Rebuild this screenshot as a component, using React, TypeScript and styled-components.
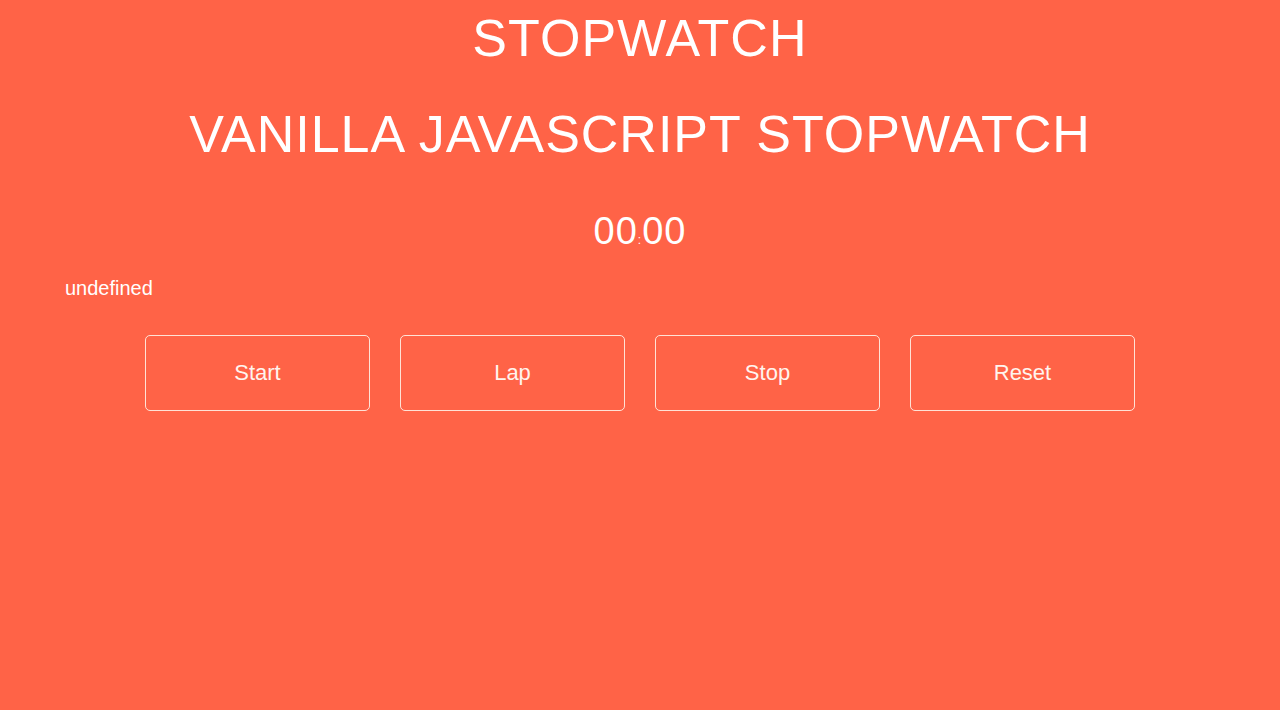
import React from "react";
import styled, { createGlobalStyle } from "styled-components";

const GlobalStyle = createGlobalStyle`
  html, body {
    margin: 0;
    padding: 0;
    background: #ff6347;
  }
  body {
    font-family: "Liberation Sans", Arial, Helvetica, sans-serif;
    color: #fff;
  }
`;

const Page = styled.div`
  min-height: 710px;
  display: flex;
  flex-direction: column;
  align-items: center;
  padding-top: 9px;
  box-sizing: border-box;
`;

const Title = styled.h1`
  margin: 0;
  font-size: 52px;
  font-weight: 400;
  line-height: 58px;
  letter-spacing: 1.1px;
`;

const Subtitle = styled.h2`
  margin: 38px 0 0;
  font-size: 52px;
  font-weight: 400;
  line-height: 58px;
  letter-spacing: 1px;
`;

const Timer = styled.div`
  margin-top: 46px;
  font-size: 38px;
  font-weight: 300;
  line-height: 44px;
  letter-spacing: 1px;
`;

const Colon = styled.span`
  font-size: 12px;
  line-height: 1;
`;

const Laps = styled.div`
  align-self: stretch;
  margin-top: 23px;
  padding-left: 65px;
  font-size: 20px;
  line-height: 24px;
`;

const Controls = styled.div`
  display: flex;
  gap: 30px;
  margin-top: 35px;
`;

const Button = styled.button`
  width: 225px;
  height: 76px;
  box-sizing: border-box;
  background: transparent;
  border: 1px solid rgba(255, 240, 230, 0.9);
  border-radius: 5px;
  color: #fff4ee;
  font-family: "Liberation Sans", Arial, Helvetica, sans-serif;
  font-size: 22px;
  cursor: pointer;
`;

export default function App() {
  return (
    <>
      <GlobalStyle />
      <Page>
        <Title>STOPWATCH</Title>
        <Subtitle>VANILLA JAVASCRIPT STOPWATCH</Subtitle>
        <Timer>
          00<Colon>:</Colon>00
        </Timer>
        <Laps>undefined</Laps>
        <Controls>
          <Button>Start</Button>
          <Button>Lap</Button>
          <Button>Stop</Button>
          <Button>Reset</Button>
        </Controls>
      </Page>
    </>
  );
}
